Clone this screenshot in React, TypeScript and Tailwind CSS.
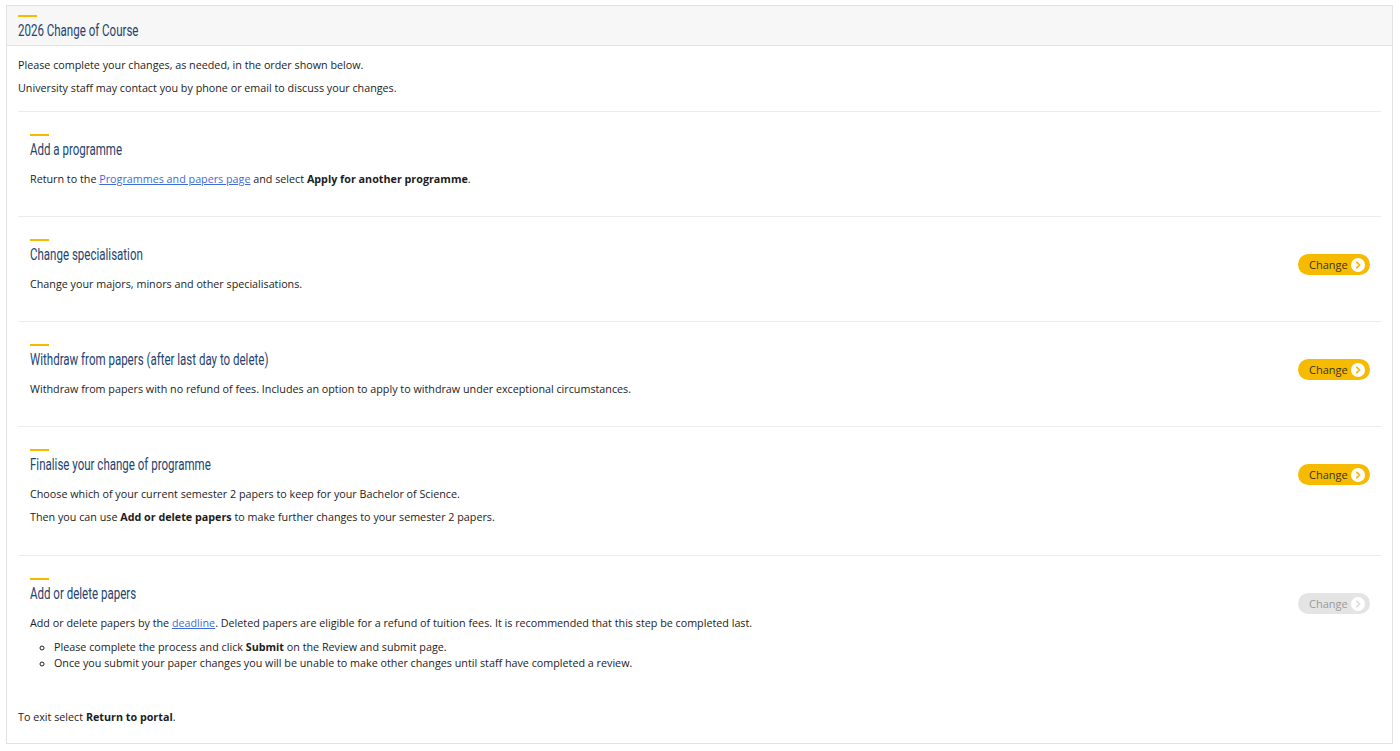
import React from "react";

const body = { fontFamily: '"Open Sans", "Noto Sans", sans-serif' };
const head = { fontFamily: 'Roboto, "Liberation Sans", sans-serif' };

function Title({ children }: { children: React.ReactNode }) {
  return (
    <div className="mt-[3px] h-[22px] whitespace-nowrap">
      <span
        className="inline-block origin-left scale-x-[0.72] text-[16px] leading-[22px] text-[#24436f]"
        style={head}
      >
        {children}
      </span>
    </div>
  );
}

function Chevron({ disabled }: { disabled?: boolean }) {
  return (
    <span className="flex h-[14px] w-[14px] shrink-0 items-center justify-center rounded-full bg-white">
      <svg width="8" height="8" viewBox="0 0 10 10" fill="none">
        <path
          d="M3.6 1.6 L7 5 L3.6 8.4"
          stroke={disabled ? "#dcdcdc" : "#f5b800"}
          strokeWidth="2.2"
          strokeLinecap="round"
          strokeLinejoin="round"
        />
      </svg>
    </span>
  );
}

function ChangeButton({ disabled }: { disabled?: boolean }) {
  return (
    <button
      className={
        disabled
          ? "mt-[15px] flex h-[21px] w-[72px] items-center justify-between rounded-full bg-[#e4e4e4] pl-[11px] pr-[5px] text-[11px] text-[#9a9a9a]"
          : "mt-[15px] flex h-[21px] w-[72px] items-center justify-between rounded-full bg-[#f6bb00] pl-[11px] pr-[5px] text-[11px] text-[#3a3320]"
      }
      style={body}
    >
      <span>Change</span>
      <Chevron disabled={disabled} />
    </button>
  );
}

function Section({
  title,
  children,
  button,
  divider = true,
  pb = "pb-[25px]",
}: {
  title: string;
  children: React.ReactNode;
  button?: "on" | "off";
  divider?: boolean;
  pb?: string;
}) {
  return (
    <div className={divider ? "border-b border-[#ececec]" : ""}>
      <div className={`flex items-start justify-between pl-[12px] pr-[11px] pt-[22px] ${pb}`}>
        <div>
          <div className="h-[2px] w-[19px] bg-[#f6bb00]" />
          <Title>{title}</Title>
          <div className="mt-[7px]">{children}</div>
        </div>
        {button === "on" && <ChangeButton />}
        {button === "off" && <ChangeButton disabled />}
      </div>
    </div>
  );
}

export default function App() {
  return (
    <div className="min-h-[751px] w-full bg-white pl-[6px] pr-[7px] pt-[5px]" style={body}>
      <div className="h-[739px] border border-[#e2e2e2] bg-white text-[10.75px] leading-[23px] text-[#1c1c1c]">
        <div className="h-[40px] border-b border-[#e3e3e3] bg-[#f7f7f7] px-[11px] pt-[9px]">
          <div className="h-[2px] w-[19px] bg-[#f6bb00]" />
          <Title>2026 Change of Course</Title>
        </div>
        <div className="px-[11px]">
          <div className="border-b border-[#ececec] pt-[8px] pb-[11px]">
            <p>Please complete your changes, as needed, in the order shown below.</p>
            <p>University staff may contact you by phone or email to discuss your changes.</p>
          </div>
          <Section title="Add a programme">
            <p>
              Return to the{" "}
              <a href="#" className="text-[#3f6ad8] underline">
                Programmes and papers page
              </a>{" "}
              and select <b className="font-bold">Apply for another programme</b>.
            </p>
          </Section>
          <Section title="Change specialisation" button="on">
            <p>Change your majors, minors and other specialisations.</p>
          </Section>
          <Section title="Withdraw from papers (after last day to delete)" button="on">
            <p>
              Withdraw from papers with no refund of fees. Includes an option to apply to withdraw under
              exceptional circumstances.
            </p>
          </Section>
          <Section title="Finalise your change of programme" button="on" pb="pb-[26px]">
            <p>Choose which of your current semester 2 papers to keep for your Bachelor of Science.</p>
            <p>
              Then you can use <b className="font-bold">Add or delete papers</b> to make further changes to
              your semester 2 papers.
            </p>
          </Section>
          <Section title="Add or delete papers" button="off" divider={false} pb="pb-[35px]">
            <p>
              Add or delete papers by the{" "}
              <a href="#" className="text-[#3f6ad8] underline">
                deadline
              </a>
              . Deleted papers are eligible for a refund of tuition fees. It is recommended that this step be
              completed last.
            </p>
            <ul className="mt-[4px] list-[circle] pl-[24px] leading-[16px]">
              <li>
                Please complete the process and click <b className="font-bold">Submit</b> on the Review and
                submit page.
              </li>
              <li>
                Once you submit your paper changes you will be unable to make other changes until staff have
                completed a review.
              </li>
            </ul>
          </Section>
          <p>
            To exit select <b className="font-bold">Return to portal</b>.
          </p>
        </div>
      </div>
    </div>
  );
}
